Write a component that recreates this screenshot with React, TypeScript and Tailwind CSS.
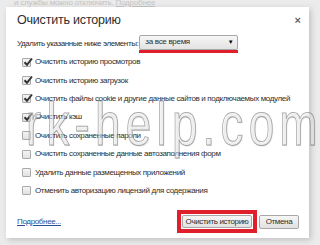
import React from "react";

const ITEMS: { label: string; checked: boolean }[] = [
  { label: "Очистить историю просмотров", checked: true },
  { label: "Очистить историю загрузок", checked: true },
  { label: "Очистить файлы cookie и другие данные сайтов и подключаемых модулей", checked: true },
  { label: "Очистить кэш", checked: true },
  { label: "Очистить сохраненные пароли", checked: false },
  { label: "Очистить сохраненные данные автозаполнения форм", checked: false },
  { label: "Удалить данные размещенных приложений", checked: false },
  { label: "Отменить авторизацию лицензий для содержания", checked: false },
];

function Checkbox({ checked }: { checked: boolean }) {
  return (
    <span className="relative flex h-[9px] w-[9px] shrink-0 items-center justify-center rounded-[1px] border border-[#a9a9a9] bg-gradient-to-b from-[#f4f4f4] to-[#e2e2e2]">
      {checked && (
        <svg viewBox="0 0 10 10" className="absolute -top-[2px] left-0 h-[10px] w-[10px]">
          <path d="M1.5 5.2 L4 7.8 L9 1.5" fill="none" stroke="#333" strokeWidth="2" />
        </svg>
      )}
    </span>
  );
}

export default function App() {
  return (
    <div className="relative h-[245px] w-[320px] overflow-hidden bg-[#ebebeb] pl-[6px] pt-[7px] font-['Liberation_Sans',Arial,sans-serif] text-[#2e2e2e]">
      {/* page behind the dialog */}
      <div className="absolute left-[14px] top-[-3px] text-[8px] tracking-[-0.2px] text-[#c4c4c4]">
        и службы можно отключить. <span className="underline">Подробнее</span>
      </div>

      <div className="relative flex h-[231px] w-[303px] flex-col bg-white pl-[11px] pr-[10px] pt-[7px] shadow-[2px_2px_6px_rgba(0,0,0,0.18)]">
        <div className="flex h-[13px] items-center justify-between">
          <span className="text-[12.5px] tracking-[-0.2px]">Очистить историю</span>
          <span className="-mr-[2px] text-[11px] font-bold leading-none text-[#666]">×</span>
        </div>

        <div className="mt-[9px] flex h-[15px] items-center gap-[1px] text-[8px] tracking-[-0.4px]">
          <span className="whitespace-nowrap">Удалить указанные ниже элементы:</span>
          <div className="flex w-[99px] flex-col">
            <div className="flex h-[15px] items-center justify-between rounded-[2px] border border-[#a7a7a7] bg-gradient-to-b from-[#f6f6f6] to-[#e3e3e3] pl-[5px] pr-[4px] tracking-[-0.3px]">
              <span>за все время</span>
              <span className="text-[6px] text-black">▼</span>
            </div>
            <div className="h-[3px] bg-[#e01f2d]" />
          </div>
        </div>

        <div className="mt-[2px] grid auto-rows-[18.4px] pl-[5px] text-[8px] tracking-[-0.35px]">
          {ITEMS.map((item) => (
            <div key={item.label} className="flex items-center gap-[4px]">
              <Checkbox checked={item.checked} />
              <span className="whitespace-nowrap">{item.label}</span>
            </div>
          ))}
        </div>

        <div className="mt-[10px] flex h-[23px] items-center justify-between text-[8px] tracking-[-0.35px]">
          <span className="text-[#2a4f97] underline">Подробнее...</span>
          <div className="flex items-center gap-[2px]">
            <div className="border-[4px] border-[#e01f2d] p-[1px]">
              <div className="flex h-[13px] w-[70px] items-center justify-center whitespace-nowrap rounded-[2px] border border-[#a7a7a7] bg-gradient-to-b from-[#f6f6f6] to-[#e1e1e1]">
                Очистить историю
              </div>
            </div>
            <div className="flex h-[14px] w-[40px] items-center justify-center rounded-[2px] border border-[#a7a7a7] bg-gradient-to-b from-[#f6f6f6] to-[#e1e1e1]">
              Отмена
            </div>
          </div>
        </div>
      </div>

      {/* watermark */}
      <div className="pointer-events-none absolute left-[26px] top-[94px] origin-left scale-x-[0.75] select-none whitespace-nowrap text-[61px] font-light leading-none tracking-[7px] text-[rgba(255,255,255,0.45)] [-webkit-text-stroke:1px_rgba(100,100,100,0.55)] [text-shadow:1px_1px_1px_rgba(0,0,0,0.12)]">
        rk-help.com
      </div>
    </div>
  );
}
